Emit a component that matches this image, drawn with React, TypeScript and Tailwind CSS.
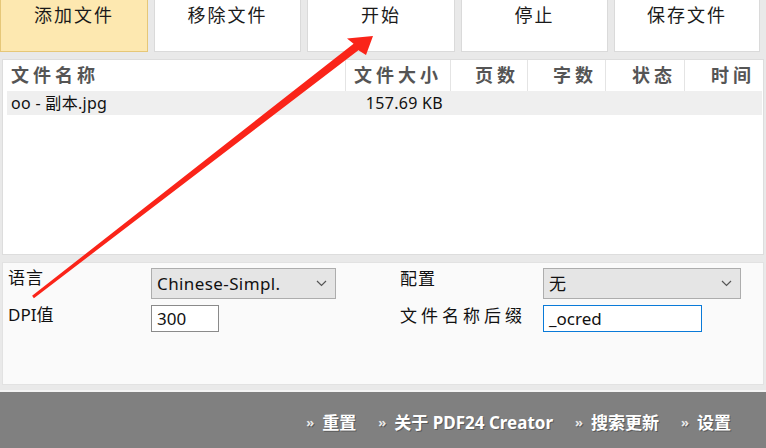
import React from 'react';

const FONT = '"Noto Sans", "Noto Sans CJK SC", sans-serif';

const BUTTONS = [
  { label: '添加文件', w: 'w-[148px]', active: true },
  { label: '移除文件', w: 'w-[147px]', active: false },
  { label: '开始', w: 'w-[148px]', active: false },
  { label: '停止', w: 'w-[147px]', active: false },
  { label: '保存文件', w: 'w-[146px]', active: false },
];

const COLUMNS = [
  { label: '文件名称', w: 'w-[343px]', align: 'justify-start pl-[8px]' },
  { label: '文件大小', w: 'w-[105px]', align: 'justify-end pr-[8px]' },
  { label: '页数', w: 'w-[77px]', align: 'justify-end pr-[8px]' },
  { label: '字数', w: 'w-[78px]', align: 'justify-end pr-[8px]' },
  { label: '状态', w: 'w-[79px]', align: 'justify-end pr-[8px]' },
  { label: '时间', w: 'w-[78px]', align: 'justify-end pr-[8px]' },
];

const FOOTER_LINKS = ['重置', '关于 PDF24 Creator', '搜索更新', '设置'];

const Chevron = () => (
  <svg width="11" height="7" viewBox="0 0 11 7" className="shrink-0">
    <path d="M1 1l4.5 4.5L10 1" fill="none" stroke="#555" strokeWidth="1.2" />
  </svg>
);

const Select = ({ value, w }: { value: string; w: string }) => (
  <div className={`${w} h-[31px] bg-[#e5e5e5] border border-[#adadad] flex items-center justify-between pl-[5px] pr-[8px] text-[17px] tracking-[0.4px] text-[#111]`}>
    <span>{value}</span>
    <Chevron />
  </div>
);

const Field = ({ value, w, focused }: { value: string; w: string; focused?: boolean }) => (
  <div
    className={`${w} h-[27px] bg-white border ${focused ? 'border-[#0a7ad8]' : 'border-[#8a8a8a]'} flex items-center pl-[5px] text-[17px] text-[#111]`}
  >
    {value}
  </div>
);

export default function App() {
  return (
    <div className="relative w-[766px] h-[448px] overflow-hidden bg-[#e9e9e9] flex flex-col" style={{ fontFamily: FONT }}>
      {/* toolbar */}
      <div className="flex gap-[6px] h-[52px] shrink-0">
        {BUTTONS.map(b => (
          <div
            key={b.label}
            className={`${b.w} h-full flex items-start justify-center pt-[2px] border border-t-0 text-[18px] tracking-[2px] text-[#1a1a1a] ${
              b.active ? 'bg-[#fde8b0] border-[#e6c778]' : 'bg-white border-[#dadada]'
            }`}
          >
            {b.label}
          </div>
        ))}
      </div>

      {/* file list */}
      <div className="mt-[7px] mx-[2px] h-[196px] shrink-0 bg-white border border-[#dddddd] flex flex-col">
        <div className="flex h-[31px]">
          {COLUMNS.map((c, i) => (
            <div
              key={c.label}
              className={`${c.w} flex items-center ${c.align} ${i < COLUMNS.length - 1 ? 'border-r border-[#e4e4e4]' : ''} text-[18px] font-bold tracking-[4px] text-[#555]`}
            >
              {c.label}
            </div>
          ))}
        </div>
        <div className="ml-[4px] mr-[1px] h-[24px] bg-[#efefef] flex items-center text-[16px] tracking-[0.3px] text-[#111]">
          <div className="w-[339px] pl-[4px]">oo - 副本.jpg</div>
          <div className="w-[105px] text-right pr-[8px]">157.69 KB</div>
        </div>
      </div>

      {/* options */}
      <div className="mt-[7px] mx-[2px] h-[123px] shrink-0 bg-[#fafafa] border border-[#e2e2e2] flex pt-[5px] text-[17px] text-[#111]">
        <div className="w-[397px] pl-[5px] flex flex-col gap-[6px]">
          <div className="flex items-start">
            <div className="w-[143px] leading-[20px] tracking-[1px]">语言</div>
            <Select value="Chinese-Simpl." w="w-[185px]" />
          </div>
          <div className="flex items-start">
            <div className="w-[143px] leading-[20px]">DPI值</div>
            <Field value="300" w="w-[68px]" />
          </div>
        </div>
        <div className="flex-1 flex flex-col gap-[6px]">
          <div className="flex items-start">
            <div className="w-[143px] leading-[20px] pt-[1px] tracking-[1px]">配置</div>
            <Select value="无" w="w-[198px]" />
          </div>
          <div className="flex items-start">
            <div className="w-[143px] leading-[20px] pt-[1px] tracking-[4px]">文件名称后缀</div>
            <Field value="_ocred" w="w-[159px]" focused />
          </div>
        </div>
      </div>

      {/* footer */}
      <div className="mt-[5px] flex-1 border-t-2 border-[#f4f4f4] bg-[#808080] flex items-center justify-end pr-[35px] gap-[22px] pt-[6px]">
        {FOOTER_LINKS.map(l => (
          <div key={l} className="flex items-center gap-[8px] text-white font-bold text-[17px] [text-shadow:1px_1px_0_#5a5a5a]">
            <span className="text-[13px] text-[#e8e8e8]">»</span>
            <span>{l}</span>
          </div>
        ))}
      </div>

      {/* annotation arrow */}
      <svg className="absolute inset-0 pointer-events-none" width="766" height="448" viewBox="0 0 766 448">
        <polygon
          points="32.1,295.8 353.6,43.8 347,38.5 373,36 366,55 358.4,50.2 33.9,298.2"
          fill="#fa2419"
        />
      </svg>
    </div>
  );
}
